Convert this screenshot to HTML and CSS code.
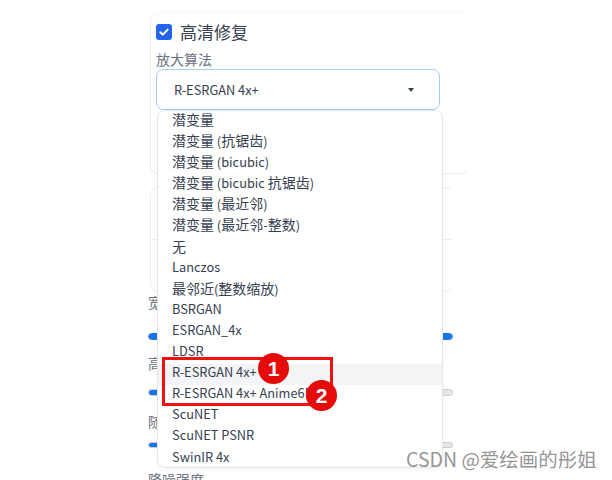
FILE: index.html
```html
<!DOCTYPE html>
<html lang="zh">
<head>
<meta charset="utf-8">
<title>高清修复</title>
<link rel="stylesheet" href="styles.css">
</head>
<body>
<div class="page">
  <div class="col">
    <div class="card card-a">
      <div class="check-row">
        <span class="checkbox"><svg width="16" height="16" viewBox="0 0 16 16"><path d="M4.3 8.2 L6.9 10.7 L11.7 5.6" fill="none" stroke="#fff" stroke-width="1.9" stroke-linecap="round" stroke-linejoin="round"/></svg></span>
        <span class="check-label">高清修复</span>
      </div>
      <div class="field-label">放大算法</div>
      <div class="select">
        <span class="select-value">R-ESRGAN 4x+</span>
        <span class="caret"></span>
      </div>
      <div class="card-a-fill"></div>
    </div>
    <div class="card card-b">
      <div class="card-b-row"></div>
      <div class="card-b-row last"></div>
    </div>
    <div class="slider-block s1">
      <div class="s-label">宽度</div>
      <div class="track full"><div class="fill" style="width:100%"></div></div>
    </div>
    <div class="slider-block s2">
      <div class="s-label">高度</div>
      <div class="track"><div class="fill" style="width:40%"></div></div>
    </div>
    <div class="slider-block s3">
      <div class="s-label">随机</div>
      <div class="track"><div class="fill" style="width:40%"></div></div>
    </div>
    <div class="s-label bottom">降噪强度</div>
  </div>

  <ul class="menu">
    <li><span class="zh">潜变量</span></li>
    <li><span class="zh">潜变量</span> (<span class="zh">抗锯齿</span>)</li>
    <li><span class="zh">潜变量</span> (bicubic)</li>
    <li><span class="zh">潜变量</span> (bicubic <span class="zh">抗锯齿</span>)</li>
    <li><span class="zh">潜变量</span> (<span class="zh">最近邻</span>)</li>
    <li><span class="zh">潜变量</span> (<span class="zh">最近邻</span>-<span class="zh">整数</span>)</li>
    <li><span class="zh">无</span></li>
    <li>Lanczos</li>
    <li><span class="zh">最邻近</span>(<span class="zh">整数缩放</span>)</li>
    <li>BSRGAN</li>
    <li>ESRGAN_4x</li>
    <li>LDSR</li>
    <li class="active">R-ESRGAN 4x+</li>
    <li>R-ESRGAN 4x+ Anime6B</li>
    <li>ScuNET</li>
    <li>ScuNET PSNR</li>
    <li>SwinIR 4x</li>
  </ul>

  <div class="mark-box"></div>
  <div class="badge b1">1</div>
  <div class="badge b2">2</div>

  <div class="watermark">CSDN @爱绘画的彤姐</div>
</div>
</body>
</html>
```

FILE: styles.css
```css
html, body {
  margin: 0;
  padding: 0;
  background: #ffffff;
}

body {
  font-family: "Noto Sans CJK SC", "Noto Sans", sans-serif;
  color: #374151;
  width: 612px;
  height: 480px;
  overflow: hidden;
}

.page {
  position: relative;
  width: 612px;
  height: 480px;
}

.col {
  margin-left: 148px;
  width: 305px;
  display: flex;
  flex-direction: column;
}

.card {
  margin-left: 2px;
  width: 301px;
  border: 1px solid #eceef1;
  border-top-color: #f8f9fa;
  border-right-color: #fbfbfc;
  border-radius: 8px;
}

.card-a {
  margin-top: 12px;
  padding: 9px 11px 0 5px;
  display: flex;
  flex-direction: column;
}

.check-row {
  height: 20px;
  display: flex;
  align-items: center;
  gap: 8px;
}

.checkbox {
  width: 16px;
  height: 16px;
  border-radius: 3px;
  background: #2563eb;
  display: flex;
}

.check-label {
  font-size: 17px;
  line-height: 20px;
  color: #374151;
}

.field-label {
  margin-top: 7px;
  font-size: 14px;
  line-height: 20px;
  color: #6b7280;
}

.select {
  box-sizing: border-box;
  width: 284px;
  height: 41px;
  border: 1px solid #a5cdfb;
  border-radius: 7px;
  display: flex;
  align-items: center;
  justify-content: space-between;
  padding: 0 25px 0 17px;
}

.select-value {
  font-size: 12.8px;
  color: #374151;
}

.caret {
  width: 0;
  height: 0;
  border-left: 3.5px solid transparent;
  border-right: 3.5px solid transparent;
  border-top: 4px solid #374151;
}

.card-a-fill {
  height: 63px;
}

.card-b {
  margin-top: 13px;
  height: 103px;
  display: flex;
  flex-direction: column;
  border-top-color: #eceef1;
}

.card-b-row {
  height: 59px;
  border-bottom: 1px solid #eceef1;
}

.card-b-row.last {
  border-bottom: none;
}

.slider-block {
  display: flex;
  flex-direction: column;
}

.s-label {
  font-size: 14px;
  line-height: 20px;
  color: #6b7280;
}

.track {
  height: 7px;
  border-radius: 4px;
  background: #e5e7eb;
  border: 1px solid #c9ccd1;
  box-sizing: border-box;
  overflow: hidden;
}

.track.full {
  border-color: #1a73e8;
}

.fill {
  height: 100%;
  background: #1a73e8;
}

.s1 .track { margin-top: 21px; }
.s2 { margin-top: 13px; }
.s2 .track { margin-top: 16px; }
.s3 { margin-top: 15px; }
.s3 .track { margin-top: 11px; height: 6px; }
.s-label.bottom { margin-top: 21px; }

.menu {
  position: absolute;
  left: 157px;
  top: 110px;
  width: 286px;
  height: 358px;
  margin: 0;
  padding: 0;
  list-style: none;
  background: #ffffff;
  border: 1px solid #e5e7eb;
  border-radius: 8px;
  box-sizing: border-box;
  box-shadow: 0 2px 4px rgba(0, 0, 0, 0.04);
  overflow: hidden;
}

.menu li {
  height: 21.1px;
  line-height: 16px;
  padding-left: 14px;
  font-size: 12.8px;
  color: #374151;
  white-space: nowrap;
}

.menu li .zh {
  font-size: 14px;
}

.menu li.active {
  background: #f3f4f6;
}

.mark-box {
  position: absolute;
  left: 162px;
  top: 357px;
  width: 171px;
  height: 49px;
  box-sizing: border-box;
  border: 3px solid #f01111;
}

.badge {
  position: absolute;
  width: 31px;
  height: 31px;
  border-radius: 50%;
  background: #e50b0b;
  color: #ffffff;
  font-family: "Liberation Sans", Arial, sans-serif;
  font-weight: bold;
  font-size: 21px;
  display: flex;
  align-items: center;
  justify-content: center;
}

.b1 {
  left: 258px;
  top: 353px;
}

.b2 {
  left: 306px;
  top: 380px;
}

.watermark {
  position: absolute;
  left: 406px;
  top: 446px;
  font-size: 19.5px;
  line-height: 26px;
  color: rgba(120, 120, 120, 0.8);
  white-space: nowrap;
}
```
